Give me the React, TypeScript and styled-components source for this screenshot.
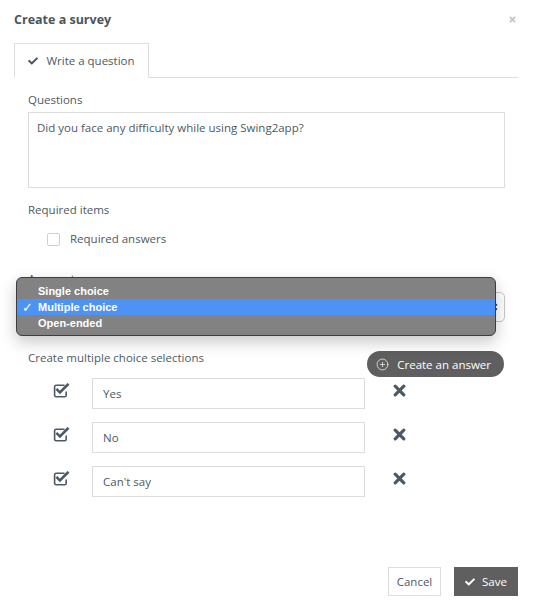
import React from "react";
import styled, { createGlobalStyle } from "styled-components";
import { FaCheck, FaTimes } from "react-icons/fa";
import { CirclePlus } from "lucide-react";

const GlobalStyle = createGlobalStyle`
  html, body {
    margin: 0;
    padding: 0;
    background: #ffffff;
  }
  * {
    box-sizing: border-box;
  }
`;

const answers = ["Yes", "No", "Can't say"];
const answerTypes = ["Single choice", "Multiple choice", "Open-ended"];

function CheckSquareIcon() {
  return (
    <svg width="17" height="15" viewBox="0 0 17 15" aria-hidden="true">
      <path
        d="M11.5 2.2H3.2c-.9 0-1.6.7-1.6 1.6v8.4c0 .9.7 1.6 1.6 1.6h8.4c.9 0 1.6-.7 1.6-1.6V8.6"
        fill="none"
        stroke="#4c5966"
        strokeWidth="1.6"
      />
      <path
        d="M4.3 6.8l2.6 2.6L14.6 1.7"
        fill="none"
        stroke="#4c5966"
        strokeWidth="2.6"
        strokeLinecap="square"
      />
    </svg>
  );
}

function BoldTimes() {
  return (
    <svg width="13" height="13" viewBox="0 0 13 13" aria-hidden="true">
      <path d="M2.2 2.2l8.6 8.6M10.8 2.2l-8.6 8.6" stroke="#4c5966" strokeWidth="3.2" strokeLinecap="round" />
    </svg>
  );
}

export default function App() {
  return (
    <>
      <GlobalStyle />
      <Modal>
        {/* Header */}
        <Header>
          <Title>Create a survey</Title>
          <CloseBtn>
            <FaTimes size={9} />
          </CloseBtn>
        </Header>

        {/* Tabs */}
        <TabBar>
          <Tab>
            <FaCheck size={10} />
            <span>Write a question</span>
          </Tab>
        </TabBar>

        {/* Form body */}
        <Body>
          <Label>Questions</Label>
          <TextArea>Did you face any difficulty while using Swing2app?</TextArea>

          <Label $top={14}>Required items</Label>
          <CheckRow>
            <Checkbox />
            <span>Required answers</span>
          </CheckRow>

          <Label $top={24}>Answer type</Label>
          <SelectWrap>
            <SelectBox>
              <span>Multiple choice</span>
              <SelectArrows>
                <svg width="7" height="12" viewBox="0 0 7 12">
                  <path d="M1 4.5L3.5 2 6 4.5M1 7.5L3.5 10 6 7.5" fill="none" stroke="#333" strokeWidth="1.4" />
                </svg>
              </SelectArrows>
            </SelectBox>
            <NativeMenu>
              {answerTypes.map((t, i) => (
                <MenuItem key={t} $active={i === 1}>
                  <MenuCheck>{i === 1 ? "✓" : ""}</MenuCheck>
                  {t}
                </MenuItem>
              ))}
            </NativeMenu>
          </SelectWrap>

          <ChoicesHead>
            <span>Create multiple choice selections</span>
            <CreateBtn>
              <CirclePlus size={13} strokeWidth={1.3} />
              <span>Create an answer</span>
            </CreateBtn>
          </ChoicesHead>

          <AnswerList>
            {answers.map((a) => (
              <AnswerRow key={a}>
                <AnswerCheck>
                  <CheckSquareIcon />
                </AnswerCheck>
                <AnswerInput>{a}</AnswerInput>
                <RemoveBtn>
                  <BoldTimes />
                </RemoveBtn>
              </AnswerRow>
            ))}
          </AnswerList>
        </Body>

        {/* Footer */}
        <Footer>
          <CancelBtn>Cancel</CancelBtn>
          <SaveBtn>
            <FaCheck size={10} />
            <span>Save</span>
          </SaveBtn>
        </Footer>
      </Modal>
    </>
  );
}

/* ── Modal ── */
const Modal = styled.div`
  width: 533px;
  height: 611px;
  display: flex;
  flex-direction: column;
  font-family: "Open Sans", "Noto Sans", sans-serif;
  font-size: 11.5px;
  color: #4e5963;
  background: #ffffff;
`;

const Header = styled.div`
  height: 38px;
  display: flex;
  align-items: center;
  justify-content: space-between;
  padding: 0 16px 0 14px;
`;

const Title = styled.h4`
  margin: 0;
  font-size: 12.5px;
  font-weight: 700;
  color: #4a5560;
`;

const CloseBtn = styled.span`
  display: flex;
  color: #c4c4c4;
`;

/* ── Tabs ── */
const TabBar = styled.div`
  margin: 5px 15px 0 14px;
  display: flex;
  border-bottom: 1px solid #dddddd;
`;

const Tab = styled.div`
  height: 35px;
  width: 135px;
  margin-bottom: -1px;
  display: flex;
  align-items: center;
  justify-content: center;
  gap: 8px;
  background: #ffffff;
  border: 1px solid #dddddd;
  border-bottom-color: #ffffff;
  color: #4e5963;
  font-size: 11.5px;

  svg {
    color: #4a5560;
  }
`;

/* ── Body ── */
const Body = styled.div`
  padding: 14px 28px 0 28px;
  display: flex;
  flex-direction: column;
`;

const Label = styled.div<{ $top?: number }>`
  margin-top: ${({ $top }) => $top ?? 0}px;
  line-height: 16px;
  color: #4e5963;
`;

const TextArea = styled.div`
  margin-top: 4px;
  height: 76px;
  padding: 7px 8px;
  border: 1px solid #dcdcdc;
  line-height: 16px;
  color: #4e5963;
`;

const CheckRow = styled.label`
  margin-top: 13px;
  padding-left: 19px;
  display: flex;
  align-items: center;
  gap: 10px;
  line-height: 16px;
`;

const Checkbox = styled.span`
  width: 13px;
  height: 13px;
  border: 1px solid #cfcfcf;
  border-radius: 2px;
  background: #ffffff;
`;

/* ── Select + native popup ── */
const SelectWrap = styled.div`
  position: relative;
  margin-top: 5px;
`;

const SelectBox = styled.div`
  height: 30px;
  border: 1px solid #c8c8c8;
  border-radius: 5px;
  display: flex;
  align-items: center;
  justify-content: space-between;
  padding: 0 6px 0 10px;
  font-size: 11.5px;
`;

const SelectArrows = styled.span`
  display: flex;
`;

const NativeMenu = styled.div`
  position: absolute;
  left: -12px;
  top: -15px;
  width: 480px;
  padding: 5px 0 4px;
  background: #828282;
  border: 1px solid #3e3e3e;
  border-radius: 6px;
  box-shadow: 0 6px 16px rgba(0, 0, 0, 0.22);
  font-family: "Liberation Sans", "DejaVu Sans", sans-serif;
  font-size: 11px;
  font-weight: 700;
  color: #ffffff;
`;

const MenuItem = styled.div<{ $active?: boolean }>`
  height: 16px;
  display: flex;
  align-items: center;
  background: ${({ $active }) => ($active ? "#4d93f6" : "transparent")};
`;

const MenuCheck = styled.span`
  width: 21px;
  padding-left: 5px;
  font-family: "DejaVu Sans", sans-serif;
  font-weight: 400;
  font-size: 13px;
`;

/* ── Choices ── */
const ChoicesHead = styled.div`
  margin-top: 28px;
  display: flex;
  align-items: flex-start;
  justify-content: space-between;
  line-height: 16px;
`;

const CreateBtn = styled.button`
  margin-top: 1px;
  margin-right: 1px;
  height: 26px;
  padding: 0 13px 0 9px;
  display: flex;
  align-items: center;
  gap: 8px;
  border: none;
  border-radius: 13px;
  background: #5f5f5f;
  color: #ffffff;
  font-family: "Open Sans", "Noto Sans", sans-serif;
  font-size: 11.5px;
  cursor: pointer;
`;

const AnswerList = styled.div`
  margin-top: 1px;
  display: flex;
  flex-direction: column;
  gap: 13px;
`;

const AnswerRow = styled.div`
  display: flex;
  align-items: flex-start;
`;

const AnswerCheck = styled.span`
  width: 64px;
  padding: 5px 0 0 25px;
  display: flex;
`;

const AnswerInput = styled.div`
  width: 273px;
  height: 31px;
  padding: 0 10px;
  display: flex;
  align-items: center;
  border: 1px solid #dcdcdc;
  color: #4e5963;
`;

const RemoveBtn = styled.span`
  margin: 6px 0 0 28px;
  display: flex;
`;

/* ── Footer ── */
const Footer = styled.div`
  margin-top: auto;
  padding: 0 15px 15px 0;
  display: flex;
  justify-content: flex-end;
  gap: 13px;
`;

const CancelBtn = styled.button`
  height: 29px;
  width: 53px;
  background: #ffffff;
  border: 1px solid #dddddd;
  color: #4e5963;
  font-family: "Open Sans", "Noto Sans", sans-serif;
  font-size: 11.5px;
  cursor: pointer;
`;

const SaveBtn = styled.button`
  height: 29px;
  width: 64px;
  display: flex;
  align-items: center;
  justify-content: center;
  gap: 7px;
  background: #5f5f5f;
  border: none;
  color: #ffffff;
  font-family: "Open Sans", "Noto Sans", sans-serif;
  font-size: 11.5px;
  cursor: pointer;
`;
